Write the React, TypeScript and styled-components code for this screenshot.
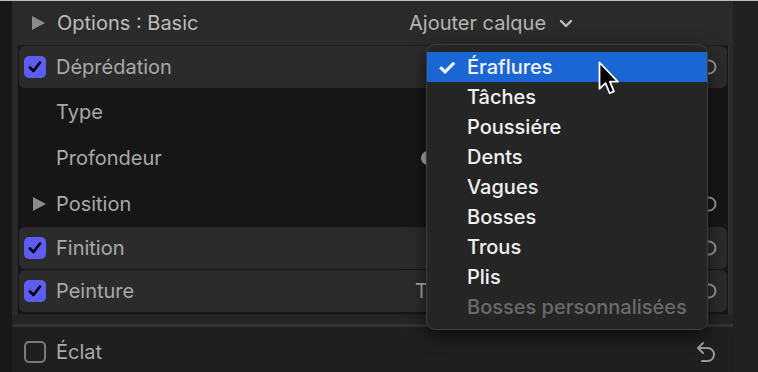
import styled, { createGlobalStyle } from 'styled-components'

const GlobalStyle = createGlobalStyle`
  html, body {
    margin: 0;
    padding: 0;
    background: #1e1e1e;
  }
  body {
    font-family: Inter, "Noto Sans", "Liberation Sans", sans-serif;
    -webkit-font-smoothing: antialiased;
  }
`

const Screen = styled.div`
  position: relative;
  width: 758px;
  height: 372px;
  display: flex;
  overflow: hidden;
  box-sizing: border-box;
  border-top: 1px solid #bdbdbd;
`

const Gutter = styled.div<{ $w: number; $bg: string }>`
  width: ${p => p.$w}px;
  flex-shrink: 0;
  background: ${p => p.$bg};
`

const Panel = styled.div`
  flex: 1;
  display: flex;
  flex-direction: column;
  background: #2a2a2a;
`

const Header = styled.div`
  height: 44px;
  display: flex;
  align-items: center;
  padding-left: 20px;
  gap: 12px;
`

const Title = styled.span`
  width: 340px;
  flex-shrink: 0;
  font-size: 20px;
  color: #bcbcbc;
`

const AddLayer = styled.span`
  display: flex;
  align-items: center;
  gap: 13px;
  font-size: 20px;
  color: #b4b4b4;
`

const Group = styled.div`
  margin-left: 5px;
  width: 712px;
  box-sizing: border-box;
  border: 1px solid #1f1f1f;
  border-left-color: #262626;
  border-right-color: #333;
  background: #161616;
  display: flex;
  flex-direction: column;
  gap: 1px;
  padding: 0 1px 2px;
`

const Row = styled.div<{ $filled?: boolean }>`
  height: ${p => (p.$filled ? 42 : 45)}px;
  display: grid;
  grid-template-columns: 396px 1fr 26px;
  align-items: center;
  border-radius: 6px;
  background: ${p => (p.$filled ? '#2b2b2b' : 'transparent')};
`

const Lead = styled.div`
  display: flex;
  align-items: center;
  gap: 10px;
  padding-left: 5px;
`

const Slot = styled.div`
  width: 22px;
  height: 22px;
  display: flex;
  align-items: center;
  justify-content: flex-end;
`

const Label = styled.span`
  font-size: 20px;
  color: #a9a9a9;
`

const Value = styled.div`
  position: relative;
  height: 100%;
  display: flex;
  align-items: center;
  font-size: 20px;
  color: #a9a9a9;
`

const Knob = styled.div`
  position: absolute;
  left: 6px;
  top: 50%;
  width: 14px;
  height: 14px;
  margin-top: -7px;
  border-radius: 50%;
  background: #a8a8a8;
`

const Check = styled.div<{ $on?: boolean }>`
  width: 22px;
  height: 22px;
  box-sizing: border-box;
  border-radius: 5px;
  display: flex;
  align-items: center;
  justify-content: center;
  background: ${p => (p.$on ? '#5d5df2' : 'transparent')};
  border: ${p => (p.$on ? 'none' : '2px solid #7a7a7a')};
`

const Spacer = styled.div`
  height: 9px;
  background: #242424;
`

const Separator = styled.div`
  height: 3px;
  margin-left: 1px;
  background: #333333;
`

const Footer = styled.div`
  flex: 1;
  display: flex;
  align-items: center;
  justify-content: space-between;
  padding: 4px 17px 0 7px;
  background: #1f1f1f;
`

const Menu = styled.div`
  position: absolute;
  left: 426px;
  top: 43px;
  width: 282px;
  height: 286px;
  box-sizing: border-box;
  padding-top: 7px;
  background: #252525;
  border: 1px solid #3d3d3d;
  border-radius: 9px;
  box-shadow: 0 6px 18px rgba(0, 0, 0, 0.55);
`

const Item = styled.div<{ $active?: boolean; $disabled?: boolean }>`
  height: 30px;
  display: flex;
  align-items: center;
  padding-left: 10px;
  font-size: 20px;
  font-weight: 500;
  color: ${p => (p.$disabled ? '#6a6a6a' : '#f2f2f2')};
  background: ${p => (p.$active ? '#1a66d3' : 'transparent')};
`

const Tick = styled.span`
  width: 30px;
  font-size: 22px;
  font-weight: 700;
`

const Pointer = styled.svg`
  position: absolute;
  left: 598px;
  top: 60px;
`

const Triangle = () => (
  <svg width="13" height="14" viewBox="0 0 13 14">
    <polygon points="0,0 13,7 0,14" fill="#8b8b8b" />
  </svg>
)

const CheckMark = () => (
  <svg width="14" height="12" viewBox="0 0 14 12">
    <path d="M2 6.5 L5.5 10 L12 1.5" fill="none" stroke="#000" strokeWidth="2.6" strokeLinecap="round" strokeLinejoin="round" />
  </svg>
)

const Ring = () => (
  <svg width="16" height="16" viewBox="0 0 16 16">
    <circle cx="8" cy="8" r="6.5" fill="none" stroke="#9a9a9a" strokeWidth="2" />
  </svg>
)

const Undo = () => (
  <svg width="20" height="24" viewBox="0 0 20 24">
    <path d="M7 3 L2 8 L7 13" fill="none" stroke="#9a9a9a" strokeWidth="2" strokeLinecap="round" strokeLinejoin="round" />
    <path d="M2 8 H11.5 a6.5 6.5 0 0 1 0 13 H6" fill="none" stroke="#9a9a9a" strokeWidth="2" strokeLinecap="round" />
  </svg>
)

const Chevron = () => (
  <svg width="14" height="9" viewBox="0 0 14 9">
    <path d="M2 2 L7 7 L12 2" fill="none" stroke="#bdbdbd" strokeWidth="2.4" strokeLinecap="round" strokeLinejoin="round" />
  </svg>
)

const menuItems = ['Éraflures', 'Tâches', 'Poussiére', 'Dents', 'Vagues', 'Bosses', 'Trous', 'Plis', 'Bosses personnalisées']

export default function App() {
  return (
    <>
      <GlobalStyle />
      <Screen>
        <Gutter $w={12} $bg="#181818" />
        <Panel>
          <Header>
            <Triangle />
            <Title>Options : Basic</Title>
            <AddLayer>
              Ajouter calque <Chevron />
            </AddLayer>
          </Header>
          <Group>
            <Row $filled>
              <Lead>
                <Check $on><CheckMark /></Check>
                <Label>Déprédation</Label>
              </Lead>
              <Value />
              <Ring />
            </Row>
            <Row>
              <Lead>
                <Slot />
                <Label>Type</Label>
              </Lead>
              <Value />
            </Row>
            <Row>
              <Lead>
                <Slot />
                <Label>Profondeur</Label>
              </Lead>
              <Value><Knob /></Value>
            </Row>
            <Row>
              <Lead>
                <Slot><Triangle /></Slot>
                <Label>Position</Label>
              </Lead>
              <Value />
              <Ring />
            </Row>
            <Row $filled>
              <Lead>
                <Check $on><CheckMark /></Check>
                <Label>Finition</Label>
              </Lead>
              <Value />
              <Ring />
            </Row>
            <Row $filled>
              <Lead>
                <Check $on><CheckMark /></Check>
                <Label>Peinture</Label>
              </Lead>
              <Value>T</Value>
              <Ring />
            </Row>
          </Group>
          <Spacer />
          <Separator />
          <Footer>
            <Lead>
              <Check />
              <Label>Éclat</Label>
            </Lead>
            <Undo />
          </Footer>
        </Panel>
        <Gutter $w={25} $bg="#212121" />

        <Menu>
          {menuItems.map((name, i) => (
            <Item key={name} $active={i === 0} $disabled={i === menuItems.length - 1}>
              <Tick>{i === 0 ? '✓' : ''}</Tick>
              {name}
            </Item>
          ))}
        </Menu>

        <Pointer width="24" height="36" viewBox="0 0 16 24">
          <path d="M1 1 L1 18.5 L5 14.8 L7.8 21.5 L10.6 20.3 L7.9 13.8 L13.2 13.8 Z" fill="#000" stroke="#fff" strokeWidth="1.2" strokeLinejoin="round" />
        </Pointer>
      </Screen>
    </>
  )
}
